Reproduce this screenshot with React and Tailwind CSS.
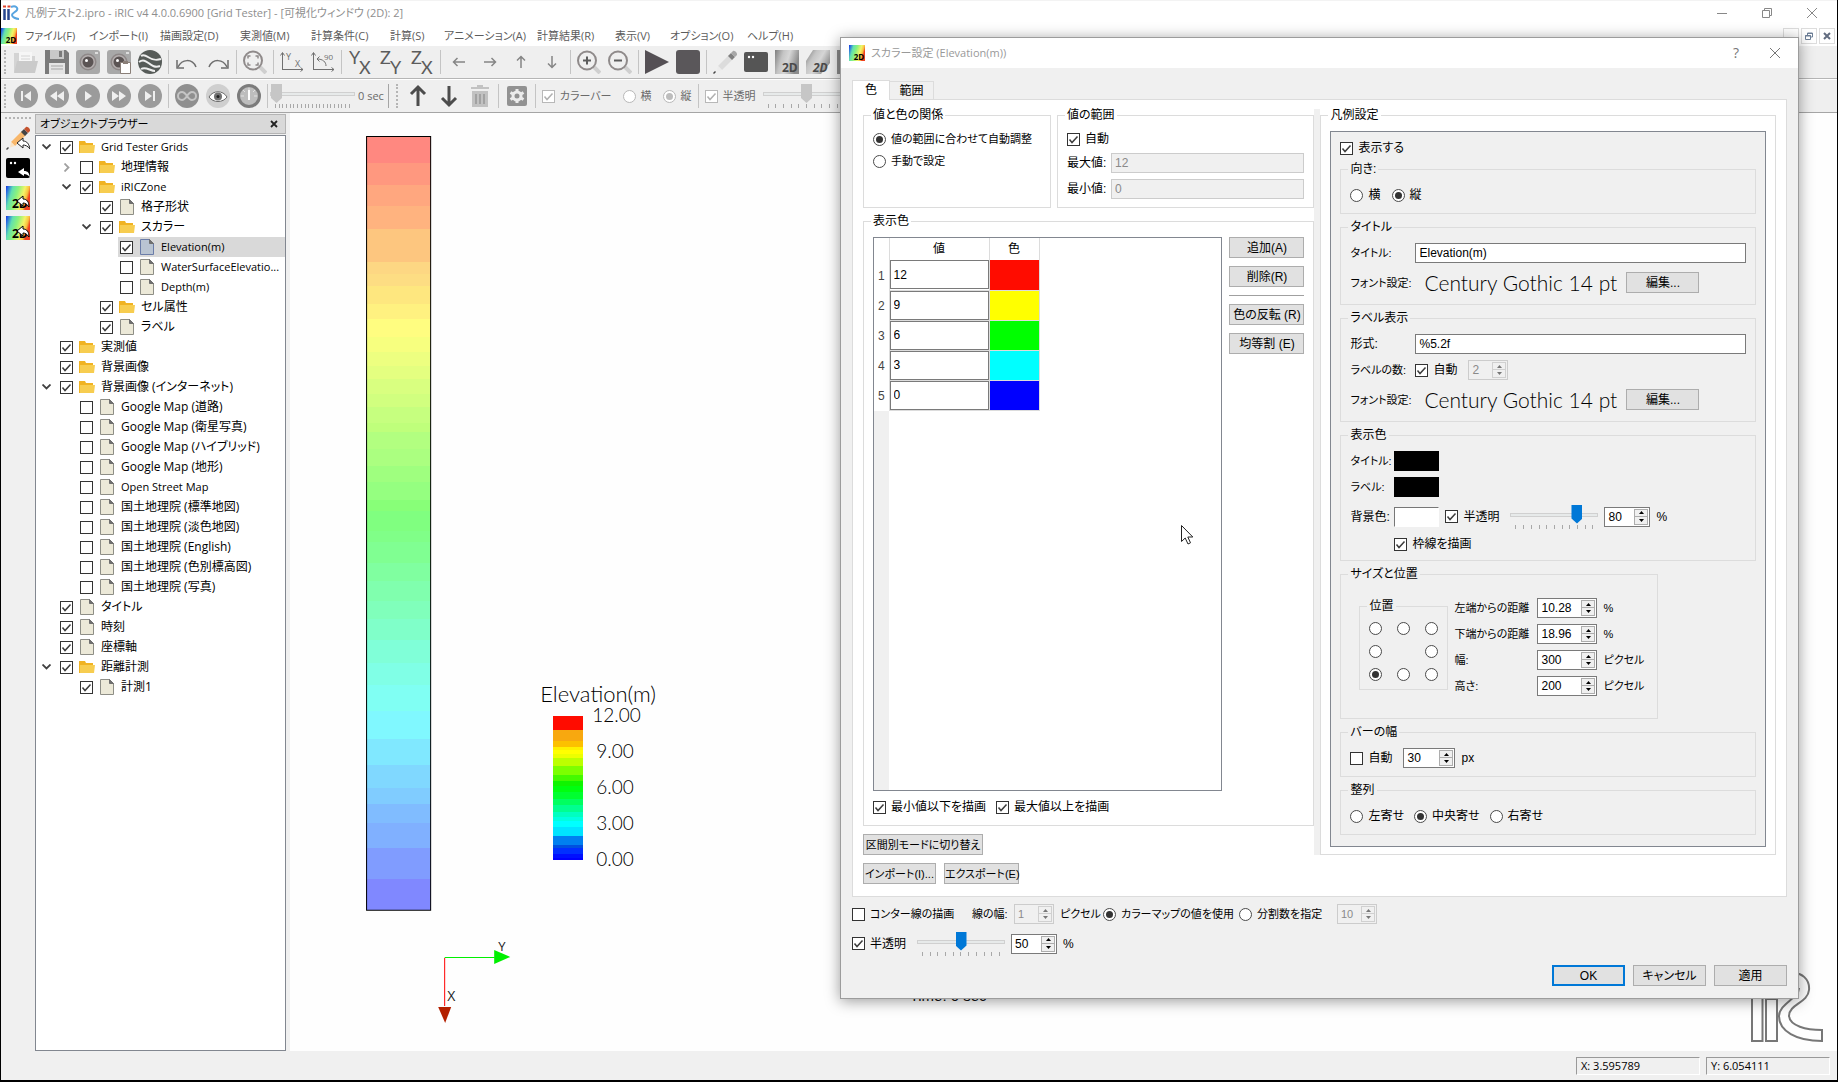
import { useState } from 'react';

const menus = [
    { name: 'ファイル(F)', width: 'w-[64px]' },
    { name: 'インポート(I)', width: 'w-[71px]' },
    { name: '描画設定(D)', width: 'w-[80px]' },
    { name: '実測値(M)', width: 'w-[71px]' },
    { name: '計算条件(C)', width: 'w-[79px]' },
    { name: '計算(S)', width: 'w-[54px]' },
    { name: 'アニメーション(A)', width: 'w-[93px]' },
    { name: '計算結果(R)', width: 'w-[78px]' },
    { name: '表示(V)', width: 'w-[55px]' },
    { name: 'オプション(O)', width: 'w-[77px]' },
    { name: 'ヘルプ(H)', width: 'w-[64px]' },
];

// arrow: 'open' | 'closed' | undefined
const tree = [
    { name: 'Grid Tester Grids', depth: 0, arrow: 'open', checked: true, folder: true },
    { name: '地理情報', depth: 1, arrow: 'closed', folder: true },
    { name: 'iRICZone', depth: 1, arrow: 'open', checked: true, folder: true },
    { name: '格子形状', depth: 2, checked: true },
    { name: 'スカラー', depth: 2, arrow: 'open', checked: true, folder: true },
    { name: 'Elevation(m)', depth: 3, checked: true, selected: true },
    { name: 'WaterSurfaceElevatio...', depth: 3 },
    { name: 'Depth(m)', depth: 3 },
    { name: 'セル属性', depth: 2, checked: true, folder: true },
    { name: 'ラベル', depth: 2, checked: true },
    { name: '実測値', depth: 0, checked: true, folder: true },
    { name: '背景画像', depth: 0, checked: true, folder: true },
    { name: '背景画像 (インターネット)', depth: 0, arrow: 'open', checked: true, folder: true },
    { name: 'Google Map (道路)', depth: 1 },
    { name: 'Google Map (衛星写真)', depth: 1 },
    { name: 'Google Map (ハイブリッド)', depth: 1 },
    { name: 'Google Map (地形)', depth: 1 },
    { name: 'Open Street Map', depth: 1 },
    { name: '国土地理院 (標準地図)', depth: 1 },
    { name: '国土地理院 (淡色地図)', depth: 1 },
    { name: '国土地理院 (English)', depth: 1 },
    { name: '国土地理院 (色別標高図)', depth: 1 },
    { name: '国土地理院 (写真)', depth: 1 },
    { name: 'タイトル', depth: 0, checked: true },
    { name: '時刻', depth: 0, checked: true },
    { name: '座標軸', depth: 0, checked: true },
    { name: '距離計測', depth: 0, arrow: 'open', checked: true, folder: true },
    { name: '計測1', depth: 1, checked: true },
];

const indents = [ 'w-0', 'w-5', 'w-10', 'w-[60px]' ];

// [ top, color ] of each band, the last one only closes the bar
const gridBands = [
    [ 137, '#ff8880' ], [ 164, '#ff987f' ], [ 186, '#ffa77f' ], [ 207, '#ffb37f' ], [ 230, '#fdc67f' ],
    [ 263, '#fdd783' ], [ 275, '#fddd83' ], [ 287, '#fee77f' ], [ 305, '#fff180' ], [ 320, '#fffd80' ],
    [ 338, '#f7ff7f' ], [ 353, '#edff80' ], [ 367, '#e4ff80' ], [ 380, '#d9ff80' ], [ 395, '#d1ff7f' ],
    [ 408, '#c6ff7f' ], [ 424, '#bfff7b' ], [ 433, '#b2ff80' ], [ 450, '#abff80' ], [ 467, '#9fff7f' ],
    [ 483, '#95ff80' ], [ 501, '#88ff78' ], [ 512, '#80ff80' ], [ 532, '#80ff88' ], [ 543, '#80ff92' ],
    [ 564, '#80ffa0' ], [ 582, '#80ffae' ], [ 601, '#80ffbb' ], [ 619, '#80ffc9' ], [ 640, '#80ffd8' ],
    [ 663, '#80ffe6' ], [ 685, '#80fff3' ], [ 711, '#80f8ff' ], [ 739, '#80e8ff' ], [ 765, '#80d8ff' ],
    [ 788, '#80ccff' ], [ 804, '#80bcff' ], [ 823, '#80b0ff' ], [ 848, '#809cff' ], [ 879, '#8088ff' ], [ 910 ],
];

const legendBands = [
    [ 716, '#ff0c00' ], [ 730, '#f8a80f' ], [ 741, '#fcc000' ], [ 747, '#fff000' ], [ 750, '#ffff00' ],
    [ 754, '#ecff00' ], [ 758, '#bcff00' ], [ 766, '#7cff00' ], [ 775, '#44fa00' ], [ 781, '#10f400' ],
    [ 786, '#00ff10' ], [ 792, '#00ff30' ], [ 799, '#00ff60' ], [ 805, '#00ff90' ], [ 812, '#00ffc0' ],
    [ 817, '#00ffe0' ], [ 821, '#00ffff' ], [ 827, '#00e4ff' ], [ 836, '#0080f0' ], [ 845, '#0050e0' ],
    [ 848, '#0030ff' ], [ 854, '#0010ff' ], [ 858, '#0000ff' ], [ 860 ],
];

const colorRows = [
    { value: '12', color: 'bg-[#ff0c00]' },
    { value: '9', color: 'bg-[#ffff00]' },
    { value: '6', color: 'bg-[#00ff00]' },
    { value: '3', color: 'bg-[#00ffff]' },
    { value: '0', color: 'bg-[#0000ff]' },
];

/* ---------- icons ---------- */

const Icon2D = ({ id, className = 'size-4', gray, slanted, undo }) => (
    <svg viewBox="0 0 24 24" className={ className }>
        <defs>
            <linearGradient id={ id } x1="0" y1="0" x2="1" y2={ slanted ? '0.6' : '0.3' }>
                {
                    gray
                        ? <>
                            <stop offset="0" stopColor="#7d7d7d" />
                            <stop offset="0.35" stopColor="#c4c4c4" />
                            <stop offset="0.6" stopColor="#d6d6d6" />
                            <stop offset="1" stopColor="#8c8c8c" />
                        </>
                        : <>
                            <stop offset="0" stopColor="#1330d8" />
                            <stop offset="0.1" stopColor="#2b6fe0" />
                            <stop offset="0.28" stopColor="#62e0b0" />
                            <stop offset="0.5" stopColor="#8cf27c" />
                            <stop offset="0.75" stopColor="#f4f468" />
                            <stop offset="0.9" stopColor="#f8c040" />
                            <stop offset="1" stopColor="#f04020" />
                        </>
                }
            </linearGradient>
        </defs>
        <path d={ slanted ? 'M7 0H24V13L15 24H0V11Z' : 'M0 0H24V24H0Z' } fill={ `url(#${ id })` } />
        <text x={ undo ? 6 : 7 } y="22" fontSize="12" fontWeight="bold" fontFamily="Open Sans, sans-serif" fontStyle={ slanted ? 'italic' : 'normal' } fill={ gray ? '#4a4a4a' : '#000' }>2D</text>
        { undo && <path d="M11 15l6-5v3c4 0 6 3 6 8-2-3-4-4-6-4v3z" fill="#fff" stroke="#000" strokeWidth="1" /> }
    </svg>
);

const Folder = () => (
    <svg viewBox="0 0 16 14" className="h-[14px] w-4">
        <path d="M0 1h6l1 2h7v3H3L1 13H0z" fill="#f0b323" />
        <path d="M1 5h15l-1 8H1z" fill="#f7cd50" />
    </svg>
);

const FileIcon = ({ selected }) => (
    <svg viewBox="0 0 14 16" className="h-4 w-[14px]">
        <path d="M0.500 0.500h9l4 4v11h-13z" fill={ selected ? '#b9c4d2' : '#ece9d8' } stroke={ selected ? '#6a7ca8' : '#8e8e86' } />
        <path d="M9.500 0.500v4h4z" fill="#6f6f6f" stroke="#6f6f6f" />
    </svg>
);

const Media = ({ children }) => (
    <svg viewBox="0 0 24 24" className="size-6">
        <circle cx="12" cy="12" r="12" fill="#9b9b9b" />
        <g fill="#efefef">{ children }</g>
    </svg>
);

const Stroke = ({ children, color = '#6e6e6e', width = 2 }) => (
    <svg viewBox="0 0 24 24" className="size-6" fill="none" stroke={ color } strokeWidth={ width }>{ children }</svg>
);

const Axes = ({ children }) => (
    <svg viewBox="0 0 24 24" className="size-6" fill="#707070" fontFamily="Open Sans, sans-serif" fontSize="9">
        <path d="M2.500 20V3M0.500 5.500L2.500 2.500 4.500 5.500M2 19.500H23M20.500 17.500L23 19.500 20.500 21.500" fill="none" stroke="#707070" />
        { children }
    </svg>
);

const Plane = ({ a, b }) => (
    <svg viewBox="0 0 24 24" className="size-6 overflow-visible" fill="#5c5c5c" fontFamily="Lato, sans-serif" fontSize="18">
        <text x="1" y="14">{ a }</text>
        <text x="11" y="24">{ b }</text>
    </svg>
);

const Magnifier = ({ children }) => (
    <Stroke color="#8f8a8a">
        <path d="M17 17l6 6" stroke="#cfcfcf" strokeWidth="4" />
        <circle cx="10" cy="10.500" r="9" />
        { children }
    </Stroke>
);

const Camera = ({ paste }) => (
    <svg viewBox="0 0 24 24" className="size-6">
        <rect width="24" height="24" rx="3" fill="#a8a8a8" />
        <circle cx="12" cy="12" r="8.500" fill="#8e8888" />
        <circle cx="12" cy="12" r="7" fill="#b5afaf" />
        <circle cx="12" cy="12" r="5.500" fill="#5b5454" />
        <circle cx="10.500" cy="10.500" r="1.500" fill="#fff" />
        <rect x="19" y="2" width="3" height="2" fill="#ddd" />
        { paste && <path d="M13.500 12.500h10v11h-10z" fill="#fff" stroke="#8a7f78" /> }
        { paste && <path d="M16 11h5v3h-5z" fill="#8a7f78" /> }
    </svg>
);

const Console = ({ color = '#555', undo }) => (
    <svg viewBox="0 0 24 24" className="size-6">
        <rect y="2" width="24" height="20" rx="2" fill={ color } />
        <circle cx="5" cy="7" r="1.200" fill="#fff" /><circle cx="9" cy="7" r="1.200" fill="#fff" />
        { undo && <path d="M12 16l6-4v3c4 0 5 2 6 6-2-2-4-3-6-3v2z" fill="#fff" /> }
    </svg>
);

const Pencil = ({ colored }) => (
    <svg viewBox="0 0 24 24" className="size-6">
        <path d="M5 16L16 5l4 4L9 20z" fill={ colored ? '#f8b76b' : '#dcdcdc' } />
        <path d="M5 16l4 4-5 1.500z" fill={ colored ? '#fbe3c4' : '#ececec' } />
        <path d="M15 6l3-3 4 4-3 3z" fill={ colored ? '#454545' : '#808080' } />
        <path d="M18 3l2-2c1-1 5 2 4 4l-2 2z" fill={ colored ? '#c5532f' : '#a8a8a8' } />
        <path d="M0 23l2-2 1 1-2 2z" fill="#444" />
        { colored && <path d="M11 17l6-5v3c4 0 6 3 7 8-2-3-5-4-7-4v3z" fill="#fff" stroke="#222" /> }
    </svg>
);

const toolbarTop = [
    { name: '開く', icon: <svg viewBox="0 0 24 24" className="size-6"><path d="M0 3h7l2 3h12v16H0z" fill="#d4d4d4" /><path d="M5 2h13v12H5z" fill="#f6f6f6" /><path d="M7 6h9M7 9h9" stroke="#d4d4d4" /><path d="M3 11h21l-3 12H0z" fill="#cacaca" /></svg> },
    { name: '保存', icon: <svg viewBox="0 0 24 24" className="size-6"><path d="M0 0h21l3 3v21H0z" fill="#7b7b7b" /><path d="M5 0h14v9H5z" fill="#c9c9c9" /><path d="M14 1h3v6h-3z" fill="#7b7b7b" /><path d="M4 13h16v11H4z" fill="#e4e4e4" /><path d="M6 16h12M6 19h12" stroke="#a5a5a5" /></svg> },
    { name: 'スナップショット', icon: <Camera /> },
    { name: 'コピー', icon: <Camera paste /> },
    { name: '地図', icon: <svg viewBox="0 0 24 24" className="size-6"><circle cx="12" cy="12" r="12" fill="#565b58" /><path d="M3 6c6-4 8 7 20 3M1 12c8-6 11 8 21 4M3 19c5-3 9 2 14 2" fill="none" stroke="#efefef" strokeWidth="2" /></svg> },
    null,
    { name: '元に戻す', icon: <Stroke width={ 1.5 }><path d="M3 17C7 9 17 8 21 17" /><path d="M2 10v8h7" /></Stroke> },
    { name: 'やり直す', icon: <Stroke width={ 1.5 }><path d="M3 17C7 8 17 9 21 17" /><path d="M22 10v8h-7" /></Stroke> },
    null,
    { name: '全体表示', icon: <Magnifier><path d="M5 8.500V6h2.500M12.500 6H15v2.500M15 12.500V15h-2.500M7.500 15H5v-2.500" strokeWidth="1.500" /></Magnifier> },
    null,
    { name: '回転リセット', icon: <Axes><text x="6" y="10">Y</text><text x="15" y="17">X</text></Axes> },
    { name: '90度回転', icon: <Axes><text x="13" y="10" fontSize="8">90</text><path d="M15 16c0-4-3-7-9-7M8.500 6.500L6 9 8.500 11.500" fill="none" stroke="#707070" /></Axes> },
    null,
    { name: 'XY平面', icon: <Plane a="Y" b="X" /> },
    { name: 'YZ平面', icon: <Plane a="Z" b="Y" /> },
    { name: 'XZ平面', icon: <Plane a="Z" b="X" /> },
    null,
    { name: '左へ', icon: <Stroke width={ 1.5 } color="#858585"><path d="M18 12H6.500M10.500 8l-4 4 4 4" /></Stroke> },
    { name: '右へ', icon: <Stroke width={ 1.5 } color="#858585"><path d="M6 12h11.500M13.500 8l4 4-4 4" /></Stroke> },
    { name: '上へ', icon: <Stroke width={ 1.5 } color="#858585"><path d="M12 18V6.500M8 10.500l4-4 4 4" /></Stroke> },
    { name: '下へ', icon: <Stroke width={ 1.5 } color="#858585"><path d="M12 6v11.500M8 13.500l4 4 4-4" /></Stroke> },
    null,
    { name: '拡大', icon: <Magnifier><path d="M6 10.500h8M10 6.500v8" stroke="#5c5c5c" /></Magnifier> },
    { name: '縮小', icon: <Magnifier><path d="M6 10.500h8" stroke="#5c5c5c" /></Magnifier> },
    null,
    { name: '計算実行', icon: <svg viewBox="0 0 24 24" className="size-6"><path d="M0 0l24 12L0 24z" fill="#555055" /></svg> },
    { name: '計算停止', icon: <svg viewBox="0 0 24 24" className="size-6"><rect width="24" height="24" rx="3" fill="#5a575a" /></svg> },
    null,
    { name: '前処理ウィンドウ', icon: <Pencil /> },
    { name: 'ソルバーコンソール', icon: <Console /> },
    { name: '可視化 2D', icon: <Icon2D id="g2" gray className="size-6" /> },
    { name: '可視化 鳥瞰', icon: <Icon2D id="g3" gray slanted className="size-6" /> },
    { name: '可視化 3D', icon: <svg viewBox="0 0 24 24" className="size-6"><path d="M0 0h24v24H0z" fill="#8c8c8c" /></svg> },
];

const toolbarAnimation = [
    { name: '最初', icon: <Media><path d="M7 7h2v10H7zM17 7v10l-7-5z" /></Media> },
    { name: '戻る', icon: <Media><path d="M12 7v10l-7-5zM19 7v10l-7-5z" /></Media> },
    { name: '再生', icon: <Media><path d="M9 7v10l7-5z" /></Media> },
    { name: '進む', icon: <Media><path d="M5 7v10l7-5zM12 7v10l7-5z" /></Media> },
    { name: '最後', icon: <Media><path d="M15 7h2v10h-2zM7 7v10l7-5z" /></Media> },
    null,
    { name: 'ループ', icon: <svg viewBox="0 0 24 24" className="size-6"><circle cx="12" cy="12" r="12" fill="#8f8f8f" /><path d="M12 12c-2-3-3-4-5-4a4 4 0 000 8c2 0 3-1 5-4s3-4 5-4a4 4 0 010 8c-2 0-3-1-5-4z" fill="none" stroke="#c4c4c4" strokeWidth="2" /></svg> },
    { name: '追従', icon: <svg viewBox="0 0 24 24" className="size-6"><circle cx="12" cy="12" r="12" fill="#cfcfcf" /><path d="M3 13c4-7 14-7 18 0-4 6-14 6-18 0z" fill="#fff" stroke="#6a6a6a" /><circle cx="12" cy="12.500" r="4" fill="#707070" /><circle cx="12" cy="12.500" r="1.500" fill="#222" /></svg> },
    { name: '速度', icon: <svg viewBox="0 0 24 24" className="size-6"><circle cx="12" cy="12" r="10.500" fill="#bdbdbd" stroke="#7b7b7b" strokeWidth="3" /><path d="M12 4v3M4 12h3M17 12h3M6 6l2 2M18 6l-2 2" stroke="#e2e2e2" /><path d="M12 6v10" stroke="#fff" strokeWidth="2" /></svg> },
    null,
];

/* ---------- controls ---------- */

const Check = ({ id, label, checked, disabled }) => (
    <span className="flex shrink-0 items-center gap-[5px]">
        <span className="relative size-[13px] shrink-0">
            <input id={ id } type="checkbox" defaultChecked={ checked } disabled={ disabled } className="peer block size-[13px] appearance-none border border-[#333333] bg-white disabled:border-[#b8b8b8]" />
            <svg viewBox="0 0 13 13" className="pointer-events-none absolute inset-0 hidden size-[13px] text-[#3c3c3c] peer-checked:block peer-disabled:text-[#b0b0b0]" fill="none" stroke="currentColor" strokeWidth="1.500">
                <path d="M2.500 6.500l2.500 3L10.500 3.500" />
            </svg>
        </span>
        { label && <label htmlFor={ id } className="whitespace-nowrap">{ label }</label> }
    </span>
);

const Radio = ({ id, name, label, hint, checked, disabled }) => (
    <span className="flex shrink-0 items-center gap-[5px]">
        <input
            id={ id }
            type="radio"
            name={ name }
            defaultChecked={ checked }
            disabled={ disabled }
            aria-label={ hint }
            className="grid size-[13px] shrink-0 appearance-none place-content-center rounded-full border border-[#4a4a4a] bg-white before:size-[7px] before:rounded-full checked:before:bg-[#333333] disabled:border-[#b8b8b8] disabled:checked:before:bg-[#bdbdbd]"
        />
        { label && <label htmlFor={ id } className="whitespace-nowrap">{ label }</label> }
    </span>
);

const Spin = ({ id, label, value, width, disabled }) => {
    const [ current, setCurrent ] = useState(value);
    const step = (amount) => setCurrent(prev => String(Number(prev) + amount));

    return (
        <span className={ `flex h-5 shrink-0 items-center border pr-px ${ width } ${ disabled ? 'border-[#cccccc] bg-[#f0f0f0] text-[#8a8a8a]' : 'border-[#7a7a7a] bg-white' }` }>
            <input id={ id } aria-label={ label } value={ current } disabled={ disabled } onChange={ (e) => setCurrent(e.target.value) } className="w-full min-w-0 bg-transparent pl-[3px] outline-none" />
            <span className={ `flex w-[14px] shrink-0 flex-col border bg-[#f0f0f0] ${ disabled ? 'border-[#d0d0d0] text-[#777777]' : 'border-[#adadad] text-black' }` }>
                <button type="button" aria-label="増やす" disabled={ disabled } onClick={ () => step(1) } className="flex h-[7px] items-center justify-center border-b border-inherit">
                    <svg viewBox="0 0 5 3" className="h-[3px] w-[5px]"><path d="M0 3L2.500 0 5 3z" fill="currentColor" /></svg>
                </button>
                <button type="button" aria-label="減らす" disabled={ disabled } onClick={ () => step(-1) } className="flex h-[7px] items-center justify-center">
                    <svg viewBox="0 0 5 3" className="h-[3px] w-[5px]"><path d="M0 0L2.500 3 5 0z" fill="currentColor" /></svg>
                </button>
            </span>
        </span>
    );
}

const Slider = ({ label, value, width, ticks = 11, disabled }) => (
    <span className={ `flex shrink-0 flex-col ${ width }` }>
        <input
            type="range"
            aria-label={ label }
            defaultValue={ value }
            disabled={ disabled }
            className="h-5 w-full appearance-none bg-transparent [&::-webkit-slider-runnable-track]:h-1 [&::-webkit-slider-runnable-track]:border [&::-webkit-slider-runnable-track]:border-[#d0d0d0] [&::-webkit-slider-runnable-track]:bg-[#e7eaea] [&::-webkit-slider-thumb]:-mt-[9px] [&::-webkit-slider-thumb]:h-[19px] [&::-webkit-slider-thumb]:w-[11px] [&::-webkit-slider-thumb]:appearance-none [&::-webkit-slider-thumb]:bg-[#0078d7] [&::-webkit-slider-thumb]:[clip-path:polygon(0_0,100%_0,100%_74%,50%_100%,0_74%)] disabled:[&::-webkit-slider-thumb]:bg-[#c6c6c6]"
        />
        <span className="flex h-1 justify-between px-[5px]">
            { Array.from({ length: ticks }, (_, index) => <i key={ index } className="w-px bg-[#a8a8a8]" />) }
        </span>
    </span>
);

const Button = ({ children, className = '' }) => (
    <button type="button" className={ `h-[21px] shrink-0 whitespace-nowrap border border-[#adadad] bg-[#e1e1e1] text-center leading-4 ${ className }` }>{ children }</button>
);

const Group = ({ title, className = '', children }) => (
    <fieldset className={ `min-w-0 border border-[#dcdcdc] px-[9px] ${ className }` }>
        <legend className="-ml-0.5 px-0.5">{ title }</legend>
        { children }
    </fieldset>
);

const TextField = ({ id, value, disabled }) => (
    <input id={ id } defaultValue={ value } disabled={ disabled } className="h-5 w-full min-w-0 flex-1 border border-[#7a7a7a] bg-white px-[3px] outline-none disabled:border-[#cccccc] disabled:bg-[#f0f0f0] disabled:text-[#8a8a8a]" />
);

const Separator = () => <span className="-mx-px h-6 w-px shrink-0 bg-[#c4c4c4]" />;

const Grip = () => <span className="h-6 w-[3px] shrink-0 border-l-2 border-dotted border-[#b5b5b5]" />;

const Tool = ({ item }) => (
    item ? <button type="button" aria-label={ item.name } className="size-6 shrink-0">{ item.icon }</button> : <Separator />
);

/* ---------- main window ---------- */

const TitleBar = () => (
    <header className="flex h-[25px] shrink-0 items-center border-t border-[#f3f3f3] pl-0.5 text-[#8e8e8e]">
        <svg viewBox="0 0 16 16" className="size-4" fill="none">
            <path d="M1.500 4v11M5.500 4v11" stroke="#27468f" strokeWidth="2.500" />
            <path d="M0 1.500h3M4.500 1.500h3" stroke="#e0452c" strokeWidth="2" />
            <path d="M8 2c5-2 7 1 6 3s-5 3-5 5 4 4 7 4" stroke="#58a5e0" strokeWidth="2" />
        </svg>
        <h1 className="ml-[6px] flex-1 whitespace-nowrap text-[11px]">凡例テスト2.ipro - iRIC v4 4.0.0.6900 [Grid Tester] - [可視化ウィンドウ (2D): 2]</h1>
        <div className="flex gap-[35px] pr-5">
            <button type="button" aria-label="最小化"><svg viewBox="0 0 10 10" className="size-[10px]"><path d="M0 5.500h10" stroke="#888" /></svg></button>
            <button type="button" aria-label="元のサイズに戻す"><svg viewBox="0 0 10 10" className="size-[10px]"><path d="M0.500 2.500h7v7h-7zM2.500 2V0.500h7v7H8" fill="none" stroke="#888" /></svg></button>
            <button type="button" aria-label="閉じる"><svg viewBox="0 0 10 10" className="size-[10px]"><path d="M0 0l10 10M10 0L0 10" stroke="#888" /></svg></button>
        </div>
    </header>
);

const MenuBar = () => (
    <nav className="flex h-[21px] shrink-0 items-center text-[11px] text-[#5c5c5c]">
        <Icon2D id="menu2d" />
        <div className="flex flex-1 pl-2">
            { menus.map(item => <button key={ item.name } type="button" className={ `shrink-0 whitespace-nowrap text-left ${ item.width }` }>{ item.name }</button>) }
        </div>
        <div className="flex gap-0.5 pr-0.5">
            <button type="button" aria-label="ウィンドウを最小化" className="grid size-4 place-content-center border border-[#dddddd]"><svg viewBox="0 0 8 8" className="size-2"><path d="M1 7h6" stroke="#666" strokeWidth="2" /></svg></button>
            <button type="button" aria-label="ウィンドウを戻す" className="grid size-4 place-content-center border border-[#dddddd]"><svg viewBox="0 0 8 8" className="size-2"><path d="M0.500 3.500h5v4h-5zM2.500 3V1h5v4H6M2 1.500h6M0 4h6" fill="none" stroke="#6d7f97" /></svg></button>
            <button type="button" aria-label="ウィンドウを閉じる" className="grid size-4 place-content-center border border-[#dddddd]"><svg viewBox="0 0 8 8" className="size-2"><path d="M1 1l6 6M7 1L1 7" stroke="#626c80" strokeWidth="2" /></svg></button>
        </div>
    </nav>
);

const Toolbars = () => (
    <div className="shrink-0 overflow-hidden bg-[#efefef] text-[#6a6a6a]">
        <div className="flex h-[33px] items-center gap-[7px] border-b border-[#b5b5b5] pl-[3px]">
            <Grip />
            { toolbarTop.map((item, index) => <Tool key={ index } item={ item } />) }
        </div>
        <div className="flex h-[34px] items-center gap-[7px] border-t border-b border-t-white border-b-[#a5a5a5] pl-[3px] text-[11px]">
            <Grip />
            { toolbarAnimation.map((item, index) => <Tool key={ index } item={ item } />) }
            <span className="-ml-1 flex items-center gap-[3px] border-r border-[#a5a5a5] pr-1">
                <Slider label="時刻" value="0" width="w-[85px]" ticks={ 21 } disabled />
                <span className="whitespace-nowrap">0 sec</span>
            </span>
            <Grip />
            <button type="button" aria-label="上へ移動" className="size-6 shrink-0"><Stroke color="#4c4c4c" width={ 3 }><path d="M12 22V4M5 10l7-7 7 7" /></Stroke></button>
            <button type="button" aria-label="下へ移動" className="size-6 shrink-0"><Stroke color="#4c4c4c" width={ 3 }><path d="M12 2v18M5 14l7 7 7-7" /></Stroke></button>
            <button type="button" aria-label="削除" className="size-6 shrink-0">
                <svg viewBox="0 0 24 24" className="size-6"><path d="M3 3h18v2H3zM9 1h6v2H9zM4 7h16v16H4z" fill="#c2c2c2" /><path d="M8 10v10M12 10v10M16 10v10" stroke="#a2a2a2" strokeWidth="2" /></svg>
            </button>
            <Separator />
            <button type="button" aria-label="設定" className="size-6 shrink-0">
                <svg viewBox="0 0 24 24" className="size-6"><rect x="2" y="2" width="20" height="20" rx="2" fill="#929292" /><circle cx="12" cy="12" r="4" fill="none" stroke="#ececec" strokeWidth="3" /><path d="M12 5v2.500M12 16.500V19M5.500 8.500l2.500 1.500M16 14l2.500 1.500M5.500 15.500L8 14M16 10l2.500-1.500" stroke="#ececec" strokeWidth="3" /></svg>
            </button>
            <Separator />
            <Check id="colorbar" label="カラーバー" checked disabled />
            <span className="flex gap-[11px] pl-1">
                <Radio id="tb-h" name="tb-dir" label="横" disabled />
                <Radio id="tb-v" name="tb-dir" label="縦" checked disabled />
            </span>
            <Separator />
            <Check id="tb-opacity" label="半透明" checked disabled />
            <Slider label="ツールバーの半透明" value="50" width="w-[88px]" disabled />
        </div>
    </div>
);

const TreeRow = ({ item, index }) => {
    const latin = /^[\x20-\x7e]+$/.test(item.name);

    return (
        <li className="flex h-5 items-center pl-[3px]">
            <span className={ `shrink-0 ${ indents[ item.depth ] }` } />
            <span className="grid w-[19px] shrink-0 place-content-center pr-1">
                { item.arrow === 'open' && <svg viewBox="0 0 9 6" className="h-[6px] w-[9px]"><path d="M0.500 0.500l4 4 4-4" fill="none" stroke="#404040" strokeWidth="1.800" /></svg> }
                { item.arrow === 'closed' && <svg viewBox="0 0 6 9" className="h-[9px] w-[6px]"><path d="M0.500 0.500l4 4-4 4" fill="none" stroke="#a0a0a0" strokeWidth="1.800" /></svg> }
            </span>
            <span className={ `flex h-5 min-w-0 flex-1 items-center ${ item.selected ? 'bg-[#d9d9d9]' : '' }` }>
                <span className="w-5 shrink-0 pl-0.5"><Check id={ `node-${ index }` } checked={ item.checked } /></span>
                <span className="grid w-[18px] shrink-0 place-content-center">{ item.folder ? <Folder /> : <FileIcon selected={ item.selected } /> }</span>
                <label htmlFor={ `node-${ index }` } className={ `whitespace-nowrap pl-[5px] ${ latin ? 'text-[11px]' : '' }` }>{ item.name }</label>
            </span>
        </li>
    );
}

const ObjectBrowser = () => (
    <aside className="flex w-[251px] shrink-0 flex-col">
        <div className="mt-px flex h-5 items-center justify-between border border-[#b4b4b4] bg-[#d9d9d9] pl-1 pr-[7px]">
            <h2 className="text-[11px]">オブジェクトブラウザー</h2>
            <button type="button" aria-label="パネルを閉じる"><svg viewBox="0 0 8 8" className="size-2"><path d="M1 1l6 6M7 1L1 7" stroke="#222" strokeWidth="1.800" /></svg></button>
        </div>
        <ul className="mt-px flex-1 border border-[#828790] bg-white pt-px">
            { tree.map((item, index) => <TreeRow key={ index } item={ item } index={ index } />) }
        </ul>
    </aside>
);

const Bands = ({ bands, x, width }) => (
    bands.slice(0, -1).map(([ top, color ], index) => (
        <rect key={ top } x={ x } y={ top } width={ width } height={ bands[ index + 1 ][ 0 ] - top } fill={ color } shapeRendering="crispEdges" />
    ))
);

const Canvas = () => (
    <main className="relative min-w-0 flex-1 overflow-hidden bg-[#fefefe]">
        <svg viewBox="290 114 1547 937" preserveAspectRatio="xMinYMin slice" className="absolute inset-0 size-full">
            <Bands bands={ gridBands } x={ 366 } width={ 65 } />
            <path d="M366.500 137.500h64v773h-64z" fill="none" stroke="#000" />

            <g fontFamily="Lato, sans-serif" fontWeight="300" fontSize="19" fill="#000">
                <text x="540" y="702" fontSize="22">Elevation(m)</text>
                <text x="592" y="722">12.00</text>
                <text x="596" y="758">9.00</text>
                <text x="596" y="794">6.00</text>
                <text x="596" y="830">3.00</text>
                <text x="596" y="866">0.00</text>
            </g>
            <Bands bands={ legendBands } x={ 553 } width={ 30 } />

            <path d="M444.500 957.500h50" stroke="#00f000" />
            <path d="M494 950l16 7-16 7z" fill="#00f000" />
            <path d="M444.500 958v48" stroke="#f00" />
            <path d="M438 1007h13l-6 16z" fill="#b42000" />
            <g fontFamily="Open Sans, sans-serif" fontSize="13" fill="#222">
                <text x="498" y="951">Y</text>
                <text x="447" y="1001" fontSize="14">X</text>
            </g>
            <text x="909" y="1001" fontFamily="Liberation Sans, sans-serif" fontSize="15" fill="#111">Time: 0 sec</text>
        </svg>
        <svg viewBox="1748 968 80 76" className="absolute bottom-[7px] right-[9px] h-[76px] w-20" fill="none" stroke="#777" strokeWidth="2">
            <path d="M1752 985h10.500v56h-10.500zM1766 999h11v42h-11z" />
            <path d="M1790 974C1802 971 1810 980 1809 990C1808 1003 1789 1004 1789 1016C1790 1026 1806 1030 1822 1030V1041C1796 1041 1779 1031 1779 1016C1779 1004 1799 998 1799 988" />
        </svg>
    </main>
);

const sideTools = [
    { name: '前処理に戻る', icon: <Pencil colored /> },
    { name: 'コンソールに戻る', icon: <Console color="#000" undo /> },
    { name: '可視化 1', icon: <Icon2D id="side1" className="size-6" undo /> },
    { name: '可視化 2', icon: <Icon2D id="side2" className="size-6" undo /> },
];

/* ---------- dialog ---------- */

const ColorTable = () => (
    <div className="flex min-w-0 flex-1 flex-col border border-[#828790] bg-white">
        <table className="w-[165px] table-fixed border-collapse">
            <thead>
                <tr className="h-[22px]">
                    <th className="w-[15px] border-r border-[#dcdcdc]" />
                    <th className="w-[100px] border-r border-[#dcdcdc] font-normal">値</th>
                    <th className="w-[50px] border-r border-[#dcdcdc] font-normal">色</th>
                </tr>
            </thead>
            <tbody>
                {
                    colorRows.map((row, index) => (
                        <tr key={ row.value } className="h-[30px]">
                            <th className="border-r border-[#dcdcdc] p-0 pt-0.5 text-center font-normal text-[#444444]">{ index + 1 }</th>
                            <td className="border-b border-r border-[#dcdcdc] p-0">
                                <input aria-label={ `値 ${ index + 1 }` } defaultValue={ row.value } className="block h-[29px] w-full border border-[#7a7a7a] px-[3px] outline-none" />
                            </td>
                            <td className={ `border-b border-r border-[#dcdcdc] p-0 ${ row.color }` } />
                        </tr>
                    ))
                }
            </tbody>
        </table>
        <div className="w-[15px] flex-1 bg-[#f0f0f0]" />
    </div>
);

const FontRow = () => (
    <div className="flex h-[27px] items-center">
        <span className="w-[74px] whitespace-nowrap text-[11px]">フォント設定:</span>
        <span className="w-[202px] whitespace-nowrap font-['Lato'] text-[21px] font-light leading-6">Century Gothic 14 pt</span>
        <Button className="w-[73px]">編集...</Button>
    </div>
);

const LegendSettings = () => (
    <Group title="凡例設定" className="pb-[7px] pt-2">
        <div className="flex flex-col gap-[5px] border border-[#828790] bg-[#f0f0f0] px-[9px] pb-[11px] pt-2">
            <div className="flex h-4"><Check id="show" label="表示する" checked /></div>
            <Group title="向き:" className="py-2">
                <div className="flex h-5 items-center gap-[11px]">
                    <Radio id="dir-h" name="dir" label="横" />
                    <Radio id="dir-v" name="dir" label="縦" checked />
                </div>
            </Group>
            <Group title="タイトル" className="py-2">
                <div className="flex flex-col gap-[6px]">
                    <div className="flex items-center"><label htmlFor="title" className="w-[65px] text-[11px]">タイトル:</label><TextField id="title" value="Elevation(m)" /></div>
                    <FontRow />
                </div>
            </Group>
            <Group title="ラベル表示" className="py-2">
                <div className="flex flex-col gap-[6px]">
                    <div className="flex items-center"><label htmlFor="format" className="w-[65px]">形式:</label><TextField id="format" value="%5.2f" /></div>
                    <div className="flex h-5 items-center">
                        <span className="w-[65px] whitespace-nowrap text-[11px]">ラベルの数:</span>
                        <span className="w-[53px]"><Check id="count-auto" label="自動" checked /></span>
                        <Spin label="ラベルの数" value="2" width="w-10" disabled />
                    </div>
                    <FontRow />
                </div>
            </Group>
            <Group title="表示色" className="py-2">
                <div className="flex flex-col gap-[6px]">
                    <div className="flex items-center"><span className="w-11 whitespace-nowrap text-[11px]">タイトル:</span><button type="button" aria-label="タイトルの色" className="h-5 w-[45px] bg-black" /></div>
                    <div className="flex items-center"><span className="w-11 whitespace-nowrap text-[11px]">ラベル:</span><button type="button" aria-label="ラベルの色" className="h-5 w-[45px] bg-black" /></div>
                    <div className="flex h-[27px] items-center">
                        <span className="w-11 whitespace-nowrap">背景色:</span>
                        <button type="button" aria-label="背景色" className="mr-[6px] h-5 w-[45px] border border-b-white border-l-[#777] border-r-white border-t-[#777] bg-white" />
                        <span className="w-[65px]"><Check id="bg-opacity" label="半透明" checked /></span>
                        <Slider label="背景の不透明度" value="80" width="w-[88px]" />
                        <span className="flex items-center gap-[6px] pl-[6px]"><Spin label="背景の不透明度 (%)" value="80" width="w-[46px]" />%</span>
                    </div>
                    <div className="flex h-4 pl-11"><Check id="frame" label="枠線を描画" checked /></div>
                </div>
            </Group>
            <Group title="サイズと位置" className="mr-[98px] pb-[22px] pt-4">
                <div className="flex items-start gap-[6px] pl-[9px]">
                    <Group title="位置" className="py-2">
                        <div className="grid grid-cols-3 gap-x-[15px] gap-y-[10px]">
                            {
                                [ '左上', '上', '右上', '左', '', '右', '左下', '下', '右下' ].map((place, index) => (
                                    place ? <Radio key={ index } id={ `place-${ index }` } name="place" hint={ place } checked={ place === '左下' } /> : <span key={ index } />
                                ))
                            }
                        </div>
                    </Group>
                    <div className="flex flex-1 flex-col gap-[6px]">
                        {
                            [
                                [ 'left', '左端からの距離', '10.28', '%' ],
                                [ 'bottom', '下端からの距離', '18.96', '%' ],
                                [ 'width', '幅:', '300', 'ピクセル' ],
                                [ 'height', '高さ:', '200', 'ピクセル' ],
                            ].map(([ id, label, value, unit ]) => (
                                <div key={ id } className="flex items-center">
                                    <label htmlFor={ id } className="w-[83px] whitespace-nowrap text-[11px]">{ label }</label>
                                    <Spin id={ id } value={ value } width="w-[60px]" />
                                    <span className="whitespace-nowrap pl-[6px] text-[11px]">{ unit }</span>
                                </div>
                            ))
                        }
                    </div>
                </div>
            </Group>
            <Group title="バーの幅" className="py-2">
                <div className="flex items-center">
                    <span className="w-[53px]"><Check id="bar-auto" label="自動" /></span>
                    <Spin label="バーの幅" value="30" width="w-[52px]" />
                    <span className="pl-[6px]">px</span>
                </div>
            </Group>
            <Group title="整列" className="py-2">
                <div className="flex h-5 items-center gap-[10px]">
                    <Radio id="align-l" name="align" label="左寄せ" />
                    <Radio id="align-c" name="align" label="中央寄せ" checked />
                    <Radio id="align-r" name="align" label="右寄せ" />
                </div>
            </Group>
        </div>
    </Group>
);

const ColorSettings = () => (
    <div className="flex flex-col">
        <div className="flex gap-[6px]">
            <Group title="値と色の関係" className="w-[188px] py-2">
                <div className="flex flex-col gap-[6px] text-[11px]">
                    <div className="flex h-4"><Radio id="mode-auto" name="mode" label="値の範囲に合わせて自動調整" checked /></div>
                    <div className="flex h-4"><Radio id="mode-manual" name="mode" label="手動で設定" /></div>
                </div>
            </Group>
            <Group title="値の範囲" className="flex-1 py-2">
                <div className="flex flex-col gap-[6px]">
                    <div className="flex h-4"><Check id="range-auto" label="自動" checked /></div>
                    <div className="flex items-center"><label htmlFor="max" className="w-11 whitespace-nowrap">最大値:</label><TextField id="max" value="12" disabled /></div>
                    <div className="flex items-center"><label htmlFor="min" className="w-11 whitespace-nowrap">最小値:</label><TextField id="min" value="0" disabled /></div>
                </div>
            </Group>
        </div>
        <Group title="表示色" className="mt-[5px] flex flex-1 flex-col pt-2">
            <div className="flex h-full flex-col gap-2 pb-[10px]">
                <div className="flex flex-1 gap-[7px]">
                    <ColorTable />
                    <div className="flex w-[75px] flex-col gap-2">
                        <Button>追加(A)</Button>
                        <Button>削除(R)</Button>
                        <hr className="border-[#a0a0a0]" />
                        <Button>色の反転 (R)</Button>
                        <Button>均等割 (E)</Button>
                    </div>
                </div>
                <div className="flex h-4 gap-[10px]">
                    <Check id="under" label="最小値以下を描画" checked />
                    <Check id="over" label="最大値以上を描画" checked />
                </div>
            </div>
        </Group>
        <div className="flex pt-2 text-[11px]"><Button className="w-[120px]">区間別モードに切り替え</Button></div>
    </div>
);

const ScalarDialog = () => (
    <section role="dialog" aria-label="スカラー設定" className="absolute left-[839px] top-[37px] w-[959px] border border-[#9c9c9c] bg-[#f0f0f0] font-['Liberation_Sans','Noto_Sans_CJK_JP',sans-serif] shadow-[0_2px_14px_rgba(0,0,0,0.4)]">
        <div className="flex h-[30px] items-center bg-white px-2 font-['Open_Sans','Noto_Sans_CJK_JP',sans-serif] text-[#999999]">
            <Icon2D id="dialog2d" />
            <h2 className="flex-1 pl-[6px] text-[11px]">スカラー設定 (Elevation(m))</h2>
            <button type="button" aria-label="ヘルプ" className="mr-1 w-10 text-sm text-[#777777]">?</button>
            <button type="button" aria-label="ダイアログを閉じる" className="px-[10px]"><svg viewBox="0 0 10 10" className="size-[10px]"><path d="M0 0l10 10M10 0L0 10" stroke="#777" /></svg></button>
        </div>
        <div className="px-[11px] pb-[12px] pt-[11px]">
            <div role="tablist" className="flex h-5 items-end">
                <button type="button" role="tab" aria-selected="true" className="relative -mb-px h-5 w-[38px] border border-b-0 border-[#dcdcdc] bg-white pb-0.5">色</button>
                <button type="button" role="tab" aria-selected="false" className="h-[18px] w-11 border border-b-0 border-l-0 border-[#dcdcdc] bg-[#f0f0f0]">範囲</button>
            </div>
            <div className="border border-[#dcdcdc] bg-white px-[10px] pb-3 pt-[7px]">
                <div className="grid grid-cols-[450fr_6px_454fr]">
                    <ColorSettings />
                    <div className="mt-0.5 bg-[#f0f0f0]" />
                    <LegendSettings />
                </div>
                <div className="flex gap-2 pt-2 text-[11px]">
                    <Button className="w-[73px]">インポート(I)...</Button>
                    <Button className="w-[75px]">エクスポート(E)</Button>
                </div>
            </div>
            <div className="mt-[7px] flex h-5 items-center text-[11px]">
                <span className="w-[120px]"><Check id="contour" label="コンター線の描画" /></span>
                <label htmlFor="line-width" className="w-[42px] whitespace-nowrap">線の幅:</label>
                <Spin id="line-width" value="1" width="w-10" disabled />
                <span className="w-[49px] whitespace-nowrap pl-[6px]">ピクセル</span>
                <span className="w-[136px]"><Radio id="use-map" name="contour" label="カラーマップの値を使用" checked /></span>
                <span className="w-[98px]"><Radio id="use-div" name="contour" label="分割数を指定" /></span>
                <Spin label="分割数" value="10" width="w-10" disabled />
            </div>
            <div className="mt-[6px] flex h-[27px] items-center">
                <span className="w-[65px]"><Check id="opacity" label="半透明" checked /></span>
                <Slider label="不透明度" value="50" width="w-[88px]" />
                <span className="flex items-center gap-[6px] pl-[6px]"><Spin label="不透明度 (%)" value="50" width="w-[46px]" />%</span>
            </div>
            <div className="mt-2 flex justify-end gap-2">
                <button type="button" className="h-[21px] w-[73px] border-2 border-[#0078d7] bg-[#e1e1e1] leading-4">OK</button>
                <Button className="w-[73px]">キャンセル</Button>
                <Button className="w-[73px]">適用</Button>
            </div>
        </div>
    </section>
);

const App = () => (
    <div className="relative flex h-screen flex-col overflow-hidden border-x border-b-2 border-black bg-white font-['Open_Sans','Noto_Sans_CJK_JP',sans-serif] text-xs leading-4 text-black [font-feature-settings:'palt']">
        <TitleBar />
        <MenuBar />
        <Toolbars />
        <div className="flex min-h-0 flex-1 bg-[#f0f0f0]">
            <div className="flex w-[34px] shrink-0 flex-col items-center gap-[6px] pt-1">
                <span className="h-[3px] w-[26px] border-t-2 border-dotted border-[#b5b5b5]" />
                { sideTools.map(item => <button key={ item.name } type="button" aria-label={ item.name } className="size-6">{ item.icon }</button>) }
            </div>
            <ObjectBrowser />
            <div className="w-1 shrink-0" />
            <Canvas />
        </div>
        <footer className="flex h-[29px] shrink-0 items-center justify-end gap-[6px] bg-[#f0f0f0] pr-[7px] text-[11px]">
            <span className="h-[18px] w-[124px] border border-b-white border-l-[#999] border-r-white border-t-[#999] pl-1">X: 3.595789</span>
            <span className="h-[18px] w-[124px] border border-b-white border-l-[#999] border-r-white border-t-[#999] pl-1">Y: 6.054111</span>
        </footer>
        <ScalarDialog />
        <svg viewBox="0 0 13 20" className="pointer-events-none absolute left-[1180px] top-[525px] h-5 w-[13px]">
            <path d="M0.500 0.500v16l3.700-3.500 2.800 6 2.500-1.200-2.700-5.800h5z" fill="#fff" stroke="#222" />
        </svg>
    </div>
);

export default App;
